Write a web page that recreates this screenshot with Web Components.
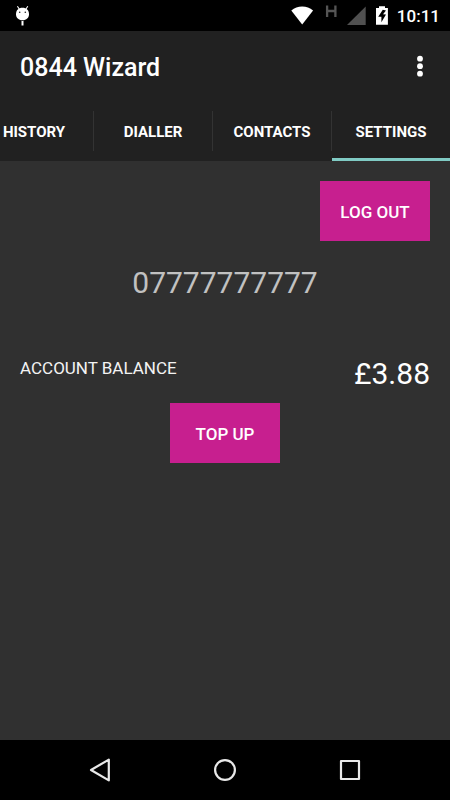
<!DOCTYPE html>
<html lang="en">
<head>
<meta charset="utf-8">
<meta name="viewport" content="width=device-width, initial-scale=1">
<title>0844 Wizard</title>
<style>
html, body {
  height: 100%;
  margin: 0;
}
body {
  background: #303030;
  color: #fff;
  font-family: Roboto, sans-serif;
}
</style>
</head>
<body>
<wizard-app></wizard-app>

<script>
function makeTemplate(html) {
  const template = document.createElement('template');
  template.innerHTML = html;
  return template;
}

class BaseElement extends HTMLElement {
  constructor() {
    super();
    this.attachShadow({ mode: 'open' });
    this.shadowRoot.appendChild(this.constructor.template.content.cloneNode(true));
  }
}

// top system bar: notification, wifi, signal, battery, clock
class StatusBar extends BaseElement {}
StatusBar.template = makeTemplate(`
<style>
:host {
  display: flex;
  justify-content: space-between;
  height: 31px;
  padding: 0 10px 0 15px;
  background: #000;
}
svg { display: block; }
.right {
  display: flex;
}
.clock {
  font-size: 17px;
  font-weight: 500;
  line-height: 33px;
}
</style>
<svg width="15" height="31" viewBox="0 0 15 31" aria-hidden="true">
  <path d="M2.4 6.3l2 3M12.8 6.3l-2 3" stroke="#fff" stroke-width="1.1"/>
  <path d="M1 14.2C1 10 3.600 7.700 7.500 7.700S14 10 14 14.200c0 3.600-2.600 6-6.500 6S1 17.800 1 14.200z" fill="#fff"/>
  <circle cx="4.700" cy="12.300" r=".8" fill="#222"/>
  <circle cx="10.300" cy="12.300" r=".8" fill="#222"/>
  <path d="M7.500 21v4.500" stroke="#fff" stroke-width="2"/>
</svg>
<div class="right">
  <svg width="106" height="31" viewBox="0 0 106 31" aria-hidden="true">
    <path d="M.3 10.600C3.500 8 7 6.600 11.200 6.600s7.700 1.400 10.900 4L11.200 24.600z" fill="#fff"/>
    <path d="M36.100 5.500v11.500M44.400 5.500v11.500M36.100 11h8.300" stroke="#555" stroke-width="2.300"/>
    <path d="M74.700 6.500V25H56z" fill="#505050"/>
    <path d="M88 6.200h6V8h2.900v16.800H85V8h3z" fill="#fff"/>
    <path d="M91.800 9.800l-4.600 7h3.200v5.400l4.600-7.600-3-.4 3-3.600z" fill="#000"/>
  </svg>
  <span class="clock"><slot></slot></span>
</div>
`);
customElements.define('status-bar', StatusBar);

class AppBar extends BaseElement {}
AppBar.template = makeTemplate(`
<style>
:host {
  display: flex;
  align-items: center;
  justify-content: space-between;
  box-sizing: border-box;
  height: 70px;
  padding: 4px 20px 0;
  background: #212121;
}
h1 {
  margin: 0;
  font-size: 25px;
  font-weight: 500;
  line-height: 30px;
}
button {
  width: 20px;
  height: 40px;
  padding: 0;
  border: 0;
  background: none;
  cursor: pointer;
}
svg { display: block; }
</style>
<h1><slot></slot></h1>
<button type="button" aria-label="More options">
  <svg width="20" height="30" viewBox="0 0 20 30" fill="#fff">
    <circle cx="10" cy="5.700" r="2.900"/>
    <circle cx="10" cy="13.200" r="2.900"/>
    <circle cx="10" cy="20.700" r="2.900"/>
  </svg>
</button>
`);
customElements.define('app-bar', AppBar);

// strip of tabs, scrolled to its end when they do not all fit
class TabStrip extends BaseElement {}
TabStrip.template = makeTemplate(`
<style>
:host {
  display: flex;
  justify-content: flex-end;
  height: 60px;
  overflow: hidden;
  background: #212121;
}
</style>
<slot></slot>
`);
customElements.define('tab-strip', TabStrip);

class TabItem extends BaseElement {
  connectedCallback() {
    this.shadowRoot
      .querySelector('button')
      .setAttribute('aria-selected', this.hasAttribute('active'));
  }
}
TabItem.template = makeTemplate(`
<style>
:host {
  display: flex;
  flex: 1 0 119px;
  align-items: center;
}
:host::before {
  content: '';
  width: 1px;
  height: 40px;
  background: #333;
}
button {
  flex: 1;
  height: 60px;
  padding: 4px 0 0;
  border: 0;
  border-bottom: 3px solid transparent;
  background: none;
  color: #fff;
  font: bold 15px/20px Roboto, sans-serif;
  text-transform: uppercase;
  cursor: pointer;
}
:host([active]) button {
  border-bottom-color: #80cbc4;
}
</style>
<button type="button" role="tab"><slot></slot></button>
`);
customElements.define('tab-item', TabItem);

class PinkButton extends BaseElement {}
PinkButton.template = makeTemplate(`
<style>
:host { display: block; }
button {
  display: block;
  min-width: 110px;
  height: 60px;
  padding: 2px 16px 0;
  border: 0;
  background: #c71f8f;
  color: #fff;
  font: 500 17px/20px Roboto, sans-serif;
  text-transform: uppercase;
  cursor: pointer;
}
</style>
<button type="button"><slot></slot></button>
`);
customElements.define('pink-button', PinkButton);

class SettingsPanel extends BaseElement {}
SettingsPanel.template = makeTemplate(`
<style>
:host {
  display: flex;
  flex: 1;
  flex-direction: column;
  align-items: center;
  padding: 20px;
}
.logout { align-self: flex-end; }
.phone {
  margin: 22px 0 52px;
  color: #c1c1c1;
  font-size: 30px;
  line-height: 40px;
}
.balance {
  display: flex;
  align-self: stretch;
  align-items: flex-start;
  justify-content: space-between;
  margin-bottom: 10px;
}
.label {
  color: #f3f3f3;
  font-size: 17px;
  line-height: 26px;
}
.amount {
  font-size: 30px;
  line-height: 38px;
}
</style>
<pink-button class="logout">Log out</pink-button>
<div class="phone"><slot name="phone"></slot></div>
<div class="balance">
  <span class="label">ACCOUNT BALANCE</span>
  <span class="amount"><slot name="amount"></slot></span>
</div>
<pink-button>Top up</pink-button>
`);
customElements.define('settings-panel', SettingsPanel);

// back, home and recents
class NavBar extends BaseElement {}
NavBar.template = makeTemplate(`
<style>
:host {
  display: flex;
  justify-content: center;
  gap: 85px;
  height: 60px;
  background: #000;
}
button {
  width: 40px;
  padding: 0;
  border: 0;
  background: none;
  cursor: pointer;
}
svg {
  display: block;
  fill: none;
  stroke: #e8e8e8;
  stroke-width: 2.2;
  stroke-linejoin: round;
}
</style>
<button type="button" aria-label="Back">
  <svg width="40" height="40" viewBox="0 0 40 40"><path d="M11 20L28.800 9.600v20.800z"/></svg>
</button>
<button type="button" aria-label="Home">
  <svg width="40" height="40" viewBox="0 0 40 40"><circle cx="20" cy="20" r="9.900"/></svg>
</button>
<button type="button" aria-label="Recent apps">
  <svg width="40" height="40" viewBox="0 0 40 40"><rect x="11" y="11" width="18" height="18"/></svg>
</button>
`);
customElements.define('nav-bar', NavBar);

class WizardApp extends BaseElement {}
WizardApp.template = makeTemplate(`
<style>
:host {
  display: flex;
  flex-direction: column;
  min-height: 100%;
}
</style>
<status-bar>10:11</status-bar>
<app-bar>0844 Wizard</app-bar>
<tab-strip role="tablist">
  <tab-item>History</tab-item>
  <tab-item>Dialler</tab-item>
  <tab-item>Contacts</tab-item>
  <tab-item active>Settings</tab-item>
</tab-strip>
<settings-panel>
  <span slot="phone">07777777777</span>
  <span slot="amount">£3.88</span>
</settings-panel>
<nav-bar></nav-bar>
`);
customElements.define('wizard-app', WizardApp);
</script>
</body>
</html>
